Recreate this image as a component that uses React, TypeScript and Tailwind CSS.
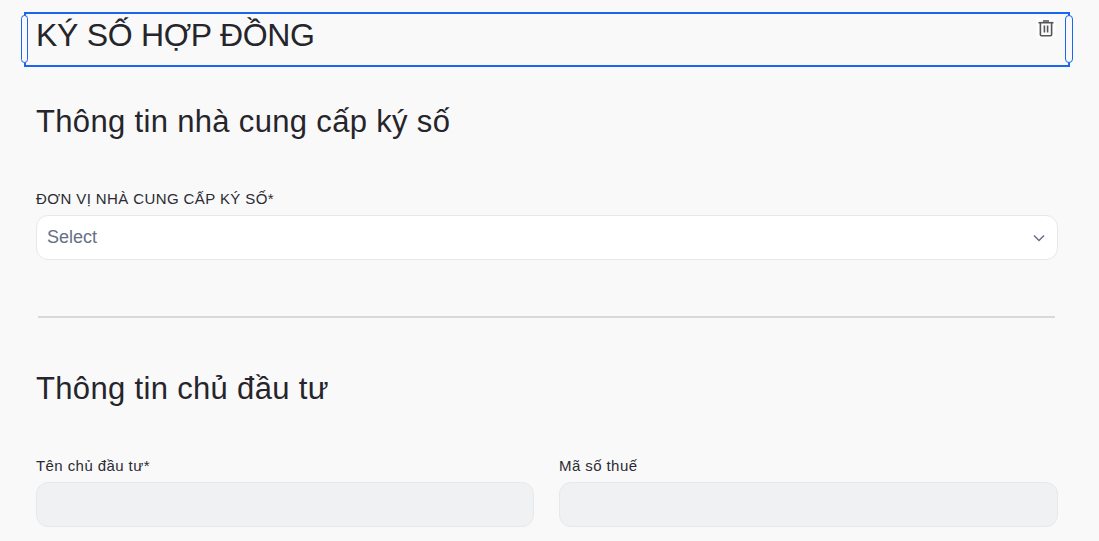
function Trash() {
  return (
    <svg width="20" height="20" viewBox="0 0 20 20" fill="none" stroke="#55555c" strokeWidth="1.6">
      <path d="M2.5 4.7h15" />
      <path d="M7 2h6v2H7z" fill="#77777e" stroke="none" />
      <path d="M4.4 4.7v12.1a1 1 0 0 0 1 1h9.2a1 1 0 0 0 1-1V4.7" />
      <path d="M8.4 7.6v7M11.6 7.6v7" />
    </svg>
  );
}

function Field({ label, className }: { label: string; className?: string }) {
  return (
    <div className={className}>
      <div className="text-[15px] leading-[20px] tracking-[0.42px] text-[#2b2b33]">{label}</div>
      <div className="mt-[6px] h-[45px] rounded-[12px] border border-[#e7e8ea] bg-[#f0f1f3]" />
    </div>
  );
}

export default function App() {
  return (
    <div className="h-[541px] w-[1099px] overflow-hidden bg-[#f9f9f9] font-['Liberation_Sans',Arial,sans-serif]">
      <div className="pl-[24px] pr-[29px] pt-[12px]">
        <div className="relative h-[55px] border-2 border-[#1a66f0] pl-[10px]">
          <div className="absolute left-[-5px] top-[1px] h-[48px] w-[7px] rounded-[4px] border border-[#1a66f0] bg-[#f9f9f9]" />
          <div className="absolute right-[-5px] top-[1px] h-[48px] w-[8px] rounded-[4px] border border-[#1a66f0] bg-[#f9f9f9]" />
          <div className="pt-[2px] text-[32px] leading-[38px] tracking-[-0.3px] text-[#25252b]">KÝ SỐ HỢP ĐỒNG</div>
          <div className="absolute right-[12px] top-[4px] bg-[#fdfdfd]">
            <Trash />
          </div>
        </div>
      </div>
      <div className="pl-[36px] pr-[41px]">
        <h2 className="mt-[35px] text-[31px] leading-[40px] tracking-[0.33px] text-[#25252b]">Thông tin nhà cung cấp ký số</h2>
        <div className="mt-[47px] text-[15px] leading-[20px] tracking-[0.4px] text-[#2b2b33]">ĐƠN VỊ NHÀ CUNG CẤP KÝ SỐ*</div>
        <div className="mt-[6px] flex h-[45px] items-center justify-between rounded-[12px] border border-[#e7e8ea] bg-white pl-[10px] pr-[11px]">
          <span className="text-[18px] text-[#667085]">Select</span>
          <svg width="14" height="14" viewBox="0 0 14 14" fill="none" stroke="#667085" strokeWidth="1.5">
            <path d="M2 4.5l5 5 5-5" />
          </svg>
        </div>
        <div className="ml-[2px] mr-[3px] mt-[56px] h-[2px] bg-[#d9d9dc]" />
        <h2 className="mt-[51px] text-[31px] leading-[40px] tracking-[0.33px] text-[#25252b]">Thông tin chủ đầu tư</h2>
        <div className="mt-[47px] flex gap-[25px]">
          <Field label="Tên chủ đầu tư*" className="w-[498px]" />
          <Field label="Mã số thuế" className="flex-1" />
        </div>
      </div>
    </div>
  );
}
